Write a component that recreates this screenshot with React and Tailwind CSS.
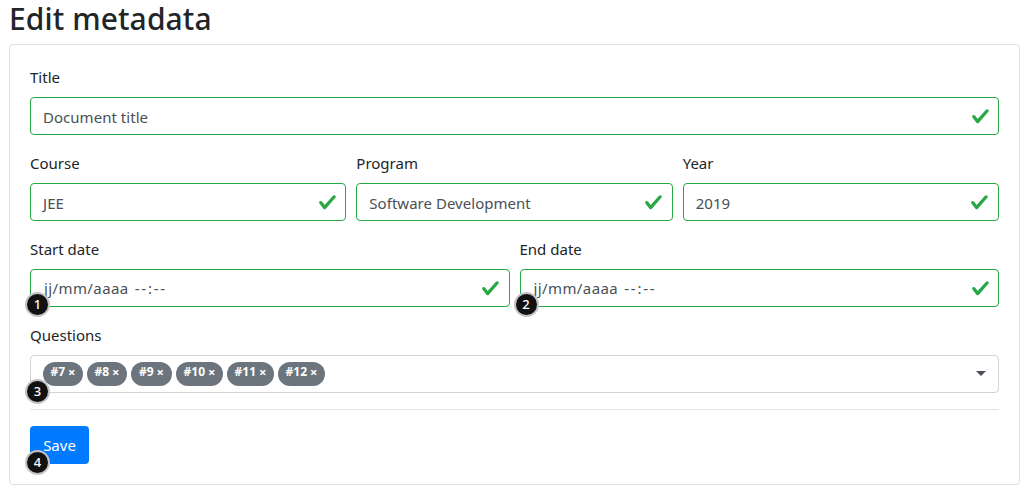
const Check = () => (
  <svg viewBox="0 0 8 8" className="mr-[8.5px] h-[19px] w-[19px] shrink-0" fill="#28a745">
    <path d="M2.3 6.63L.6 4.43c-.4-1.04.46-1.4 1.1-.8l1.1 1.4 3.4-3.8c.6-.63 1.6-.27 1.2.7l-4 4.6c-.43.5-.8.4-1.1.1z" />
  </svg>
);

const Marker = ({ children, place = "-left-[6px] top-[22px]" }) => (
  <span className={`absolute ${place} flex h-[25px] w-[25px] items-center justify-center rounded-full border-2 border-[#c4c2c3] bg-[#111] font-['Noto_Sans','Open_Sans',sans-serif] text-[13px] leading-none font-medium text-white`}>
    {children}
  </span>
);

const Field = ({ label, value, marker, place }) => (
  <div className="min-w-0 flex-1">
    <div className="mb-2 h-6 leading-6">{label}</div>
    <div className="relative flex h-[38px] items-center justify-between rounded-[4px] border border-[#28a745] bg-white pl-3 text-[#495057]">
      <span className="pt-[3px] tracking-[0.03px]">{value}</span>
      <Check />
      {marker && <Marker place={place}>{marker}</Marker>}
    </div>
  </div>
);

const DateValue = () => (
  <span className="flex gap-[6px] pb-[3px] pl-px">
    <span className="tracking-[0.4px]">jj/mm/aaaa</span>
    <span className="tracking-[1.8px]">--:--</span>
  </span>
);

const tags = [
  { text: "#7", width: "w-10" },
  { text: "#8", width: "w-10" },
  { text: "#9", width: "w-[41px]" },
  { text: "#10", width: "w-[47px]" },
  { text: "#11", width: "w-[47px]" },
  { text: "#12", width: "w-[47px]" },
];

export default function App() {
  return (
    <div className="h-[492px] w-[1028px] bg-white pl-[9px] font-['Noto_Sans','Open_Sans',sans-serif] text-[15px] whitespace-nowrap text-[#212529]">
      <h1 className="mb-[6px] h-[38px] text-[30px] leading-[38px] font-medium tracking-[0.1px]">Edit metadata</h1>
      <div className="flex h-[441px] w-[1011px] flex-col rounded-[4px] border border-[#dfdfdf] p-5">
        <div className="mb-4 flex">
          <Field label="Title" value="Document title" />
        </div>
        <div className="mb-4 flex gap-[10px]">
          <Field label="Course" value="JEE" />
          <Field label="Program" value="Software Development" />
          <Field label="Year" value="2019" />
        </div>
        <div className="mb-4 flex gap-[10px]">
          <Field label="Start date" value={<DateValue />} marker="1" />
          <Field label="End date" value={<DateValue />} marker="2" place="-left-[7px] top-[22px]" />
        </div>
        <div className="mb-2 h-6 leading-6">Questions</div>
        <div className="relative flex h-[38px] items-center justify-between rounded-[4px] border border-[#ced4da] pr-3 pl-3">
          <div className="flex gap-1">
            {tags.map((t) => (
              <span key={t.text} className={`${t.width} flex h-6 justify-center gap-[3px] rounded-full bg-[#6c757d] pt-[3px] text-[12px] leading-[14px] font-bold text-white`}>
                <span>{t.text}</span>
                <span className="text-[13px]">×</span>
              </span>
            ))}
          </div>
          <svg width="10" height="5" viewBox="0 0 10 5" fill="#495057" className="-mt-px">
            <path d="M0 0h10L5 5z" />
          </svg>
          <Marker place="-left-[6px] top-[23px]">3</Marker>
        </div>
        <div className="my-4 h-px shrink-0 bg-[#e5e5e5]" />
        <div className="relative flex h-[38px] w-[59px] items-center justify-center rounded-[4px] bg-[#007bff] text-white">
          <span>Save</span>
          <Marker place="-left-[5px] top-[24px]">4</Marker>
        </div>
      </div>
    </div>
  );
}
